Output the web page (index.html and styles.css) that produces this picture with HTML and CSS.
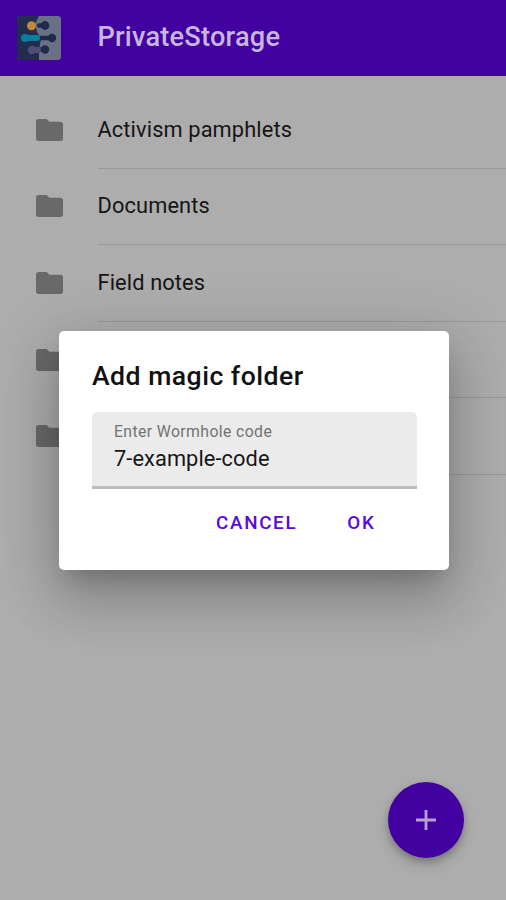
FILE: index.html
```html
<!DOCTYPE html>
<html lang="en">
<head>
<meta charset="utf-8">
<title>PrivateStorage</title>
<link rel="stylesheet" href="styles.css">
</head>
<body>
<svg class="defs" aria-hidden="true">
  <symbol id="folder" viewBox="0 0 27 22"><path d="M2.7 0H10.6L13.4 2.7H24.3Q27 2.7 27 5.4V19.3Q27 22 24.3 22H2.7Q0 22 0 19.3V2.7Q0 0 2.7 0Z"/></symbol>
</svg>
<div class="screen">
  <header class="app-bar">
    <svg class="logo" viewBox="0 0 44 44">
      <rect width="44" height="44" rx="3" fill="#6a7184"/>
      <path d="M3 0H22L18 8L20 16L24 23L22 34V44H3Q0 44 0 41V3Q0 0 3 0Z" fill="#222c4e"/>
      <g stroke-linecap="round" fill="none">
        <path d="M22 9.5H28M24 22H35M21 33.5H28" stroke="#202a4c" stroke-width="4.5"/>
        <path d="M8 22H20" stroke="#087f9d" stroke-width="6"/>
        <path d="M15 34H21" stroke="#4e4d77" stroke-width="6"/>
      </g>
      <g fill="#202a4c"><circle cx="28" cy="9.5" r="4.4"/><circle cx="35" cy="22" r="4.2"/><circle cx="28" cy="33.5" r="4.2"/></g>
      <circle cx="14.5" cy="9.7" r="4.5" fill="#c08a36"/>
      <circle cx="8" cy="22" r="4" fill="#087f9d"/>
      <circle cx="15" cy="34" r="4.2" fill="#4e4d77"/>
    </svg>
    <h1>PrivateStorage</h1>
  </header>
  <ul class="folders">
    <li><svg class="folder"><use href="#folder"/></svg><div class="name"><span>Activism pamphlets</span></div></li>
    <li><svg class="folder"><use href="#folder"/></svg><div class="name"><span>Documents</span></div></li>
    <li><svg class="folder"><use href="#folder"/></svg><div class="name"><span>Field notes</span></div></li>
    <li><svg class="folder"><use href="#folder"/></svg><div class="name"></div></li>
    <li><svg class="folder"><use href="#folder"/></svg><div class="name"></div></li>
  </ul>
  <button class="fab" aria-label="Add"><svg viewBox="0 0 20 20"><path d="M10 0V20M0 10H20" stroke="#b6a2d3" stroke-width="2.8"/></svg></button>
  <section class="dialog" role="dialog">
    <h2>Add magic folder</h2>
    <div class="field">
      <span class="label">Enter Wormhole code</span>
      <span class="value">7-example-code</span>
    </div>
    <div class="actions"><button>CANCEL</button><button>OK</button></div>
  </section>
</div>
</body>
</html>
```
FILE: styles.css
```css
* { box-sizing: border-box; }
body { margin: 0; font-family: Roboto, "Liberation Sans", sans-serif; }
h1, h2, ul { margin: 0; padding: 0; }
button { border: 0; padding: 0; background: none; font: inherit; }
.defs { position: absolute; width: 0; height: 0; }
.screen { position: relative; width: 506px; height: 900px; overflow: hidden; background: #adadad; }
.app-bar { display: flex; align-items: center; height: 76px; padding: 0 0 1px 16.5px; background: #4300a0; }
.logo { width: 44px; height: 44px; flex: none; }
h1 { margin: -2px 0 0 37px; font-size: 27.2px; font-weight: 500; line-height: 32px; letter-spacing: 0.2px; color: #c5b6dc; }
.folders { list-style: none; padding-top: 16px; }
.folders li { display: flex; align-items: center; height: 76.6px; padding-left: 35.5px; }
.folder { width: 27px; height: 22px; margin-top: -1px; flex: none; fill: #696969; }
.name { display: flex; align-items: center; flex: 1; height: 100%; margin-left: 35px; border-bottom: 1px solid #999; }
.name span { font-size: 21.8px; line-height: 26px; letter-spacing: 0.12px; color: #151515; }
.fab { position: absolute; left: 388px; top: 782px; width: 76px; height: 76px; border-radius: 50%; background: #4300a0; display: flex; align-items: center; justify-content: center; box-shadow: 0 4px 7px rgba(0,0,0,.22), 0 7px 15px rgba(0,0,0,.12); }
.fab svg { width: 20px; height: 20px; }
.dialog { position: absolute; left: 59px; top: 331px; width: 390px; height: 239px; padding: 29px 32px 0 33px; border-radius: 5px; background: #fff; box-shadow: 0 15px 21px -10px rgba(0,0,0,.2), 0 30px 52px 4px rgba(0,0,0,.15), 0 12px 62px 11px rgba(0,0,0,.12); }
h2 { font-size: 26.6px; font-weight: 500; line-height: 32px; letter-spacing: 0.48px; color: #111; }
.field { display: flex; flex-direction: column; height: 77px; margin-top: 20px; padding: 10px 22px 0; background: #ebebeb; border-bottom: 3px solid #bcbcbc; border-radius: 5px 5px 0 0; }
.label { font-size: 15.8px; line-height: 20px; letter-spacing: 0.38px; color: #737373; }
.value { margin-top: 4px; font-size: 21.8px; line-height: 26px; letter-spacing: 0.08px; color: #171717; }
.actions { display: flex; justify-content: flex-end; gap: 50px; margin-top: 22px; padding-right: 41.5px; }
.actions button { font-size: 18.8px; font-weight: 500; line-height: 24px; letter-spacing: 1.7px; color: #5a08e0; }
```
